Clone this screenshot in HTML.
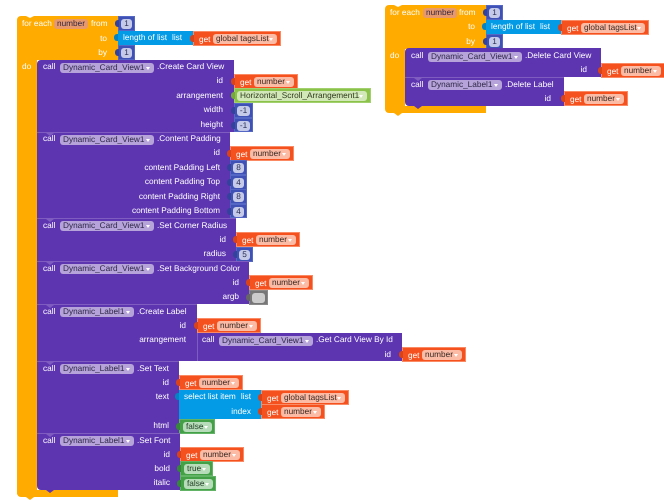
<!DOCTYPE html>
<html><head><meta charset="utf-8">
<style>
html,body{margin:0;padding:0;background:#fff}
#r{position:relative;width:664px;height:500px;overflow:hidden;background:#fff;font:8.25px/14px "Liberation Sans",sans-serif;color:#fff;text-rendering:geometricPrecision;filter:blur(.25px)}
#r div,#r span{position:absolute;box-sizing:border-box;white-space:nowrap}
.o{background:#ffab00}
.p{background:#5e35b1;border-top:1px solid #7e5cc0}
.t{line-height:14px;margin-top:1px}
.f{height:10px;line-height:10px;margin-top:.5px;border-radius:3px;background:#b5a3d9;color:#2f2748;padding-left:3px}
.f:after,.gf:after,.gn:after,.lf:after{content:"";position:absolute;right:4px;top:4px;border:2px solid transparent;border-top:3px solid #fff;border-bottom:0}
.f.x:after{display:none}
.g,.gw{position:absolute;background:#f4511e;height:15px;width:64px;border:1px solid #f98a63}
.gw{width:88px}
.g:before,.gw:before{content:"";position:absolute;left:-4px;top:3px;width:4px;height:7px;background:#d8431a;border-radius:3px 0 0 3px}
.g u,.gw u{position:absolute;left:5px;top:.5px;text-decoration:none;line-height:13px}
.gn,.gf{position:absolute;left:19px;top:1.5px;height:10px;width:40px;border-radius:3px;background:#fbbba5;color:#3a2a24;line-height:10px;padding-left:3px}
.gf{width:64px}
.n{background:#3f51b5;height:15px;width:17px;border:1px solid #5567c4}
.n:before,.lb:before,.v:before,.c:before{content:"";position:absolute;left:-4px;top:3px;width:4px;height:7px;background:#33429b;border-radius:3px 0 0 3px}
.n span{left:2px;top:1.5px;width:11px;height:10px;border-radius:3px;background:#c5cae9;color:#2a2f55;line-height:10px;text-align:center}
.lb{background:#039be5;border:0}
.lb:before{background:#0383c1}
.v{background:#43a047;border:1px solid #62b366;height:15px}
.v:before{background:#37873b}
.lf{left:3px;top:1.5px;height:10px;border-radius:3px;background:#b7dcb9;color:#24402a;line-height:10px;padding-left:3px}
.lg{background:#8bc34a;border:1px solid #a3d06f;height:15px}
.lg:before{content:"";position:absolute;left:-4px;top:3px;width:4px;height:7px;background:#76a83d;border-radius:3px 0 0 3px}
.lr{left:2px;top:1.5px;height:10px;border-radius:3px;background:#d2e8b8;color:#2e3a1d;line-height:10px;padding-left:3px}
.lr:after{content:"";position:absolute;right:4px;top:4px;border:2px solid transparent;border-top:3px solid #fff;border-bottom:0}
.c{background:#777;border:1px solid #8a8a8a;height:15px}
.c:before{background:#666}
.k{width:8px;height:3px;background:#ffab00;clip-path:polygon(0 0,100% 0,50% 100%)}
.d{width:8px;height:3px;background:#7e5cc0;clip-path:polygon(0 0,100% 0,50% 100%)}
</style></head><body>
<div id="r">

<!-- MAIN LOOP -->
<div class="o" style="left:17px;top:16px;width:101px;height:44px;border-radius:4px 0 0 0"></div>
<div class="o" style="left:17px;top:60px;width:20px;height:434px"></div>
<div class="o" style="left:17px;top:490px;width:101px;height:7px;border-radius:0 0 0 4px"></div>
<div class="k" style="left:26px;top:497px"></div>
<div style="left:26px;top:16px;width:8px;height:2px;background:#fff;clip-path:polygon(0 0,100% 0,50% 100%)"></div>
<span class="t" style="left:22px;top:16px">for each</span>
<span class="f x" style="left:54px;top:18px;width:34px;background:#e8996b;padding-left:3px">number</span>
<span class="t" style="left:91px;top:16px">from</span>
<span class="t" style="right:557px;top:31px">to</span>
<span class="t" style="right:557px;top:45px">by</span>
<span class="t" style="left:22px;top:59px">do</span>

<div class="n" style="left:118px;top:16px"><span>1</span></div>
<div class="lb" style="left:118px;top:31px;width:75px;height:14px"></div>
<span class="t" style="left:123px;top:30px">length of list</span>
<span class="t" style="left:172px;top:30px">list</span>
<div class="gw" style="left:193px;top:31px"><u>get</u><span class="gf">global tagsList</span></div>
<div class="n" style="left:118px;top:45px"><span>1</span></div>

<!-- Block 1 -->
<div class="p" style="left:37px;top:60px;width:197px;height:72px;border-top:0;border-radius:4px 0 0 0"></div>
<span class="t" style="left:43px;top:59px">call</span>
<span class="f" style="left:60px;top:62px;width:94px">Dynamic_Card_View1</span>
<span class="t" style="left:157px;top:59px">.Create Card View</span>
<span class="t" style="right:441px;top:73px">id</span>
<span class="t" style="right:441px;top:88px">arrangement</span>
<span class="t" style="right:441px;top:102px">width</span>
<span class="t" style="right:441px;top:117px">height</span>
<div class="g" style="left:234px;top:74px"><u>get</u><span class="gn">number</span></div>
<div class="lg" style="left:234px;top:88px;width:137px"><span class="lr" style="width:130px">Horizontal_Scroll_Arrangement1</span></div>
<div class="n" style="left:234px;top:103px;width:19px"><span style="width:13px">-1</span></div>
<div class="n" style="left:234px;top:118px;width:19px;height:14px"><span style="width:13px">-1</span></div>

<!-- Block 2 -->
<div class="p" style="left:37px;top:132px;width:193px;height:86px"></div>
<div class="d" style="left:46px;top:133px"></div>
<span class="t" style="left:43px;top:131px">call</span>
<span class="f" style="left:60px;top:134px;width:94px">Dynamic_Card_View1</span>
<span class="t" style="left:157px;top:131px">.Content Padding</span>
<span class="t" style="right:444px;top:145px">id</span>
<span class="t" style="right:444px;top:160px">content Padding Left</span>
<span class="t" style="right:444px;top:174px">content Padding Top</span>
<span class="t" style="right:444px;top:189px">content Padding Right</span>
<span class="t" style="right:444px;top:203px">content Padding Bottom</span>
<div class="g" style="left:230px;top:146px"><u>get</u><span class="gn">number</span></div>
<div class="n" style="left:230px;top:160px"><span>8</span></div>
<div class="n" style="left:230px;top:175px"><span>4</span></div>
<div class="n" style="left:230px;top:189px"><span>8</span></div>
<div class="n" style="left:230px;top:204px;height:14px"><span>4</span></div>

<!-- Block 3 -->
<div class="p" style="left:37px;top:218px;width:199px;height:43px"></div>
<div class="d" style="left:46px;top:219px"></div>
<span class="t" style="left:43px;top:218px">call</span>
<span class="f" style="left:60px;top:220px;width:94px">Dynamic_Card_View1</span>
<span class="t" style="left:157px;top:218px">.Set Corner Radius</span>
<span class="t" style="right:438px;top:232px">id</span>
<span class="t" style="right:438px;top:246px">radius</span>
<div class="g" style="left:236px;top:232px"><u>get</u><span class="gn">number</span></div>
<div class="n" style="left:236px;top:247px"><span>5</span></div>

<!-- Block 4 -->
<div class="p" style="left:37px;top:261px;width:212px;height:43px"></div>
<div class="d" style="left:46px;top:262px"></div>
<span class="t" style="left:43px;top:261px">call</span>
<span class="f" style="left:60px;top:263px;width:94px">Dynamic_Card_View1</span>
<span class="t" style="left:157px;top:261px">.Set Background Color</span>
<span class="t" style="right:425px;top:275px">id</span>
<span class="t" style="right:425px;top:289px">argb</span>
<div class="g" style="left:249px;top:275px"><u>get</u><span class="gn">number</span></div>
<div class="c" style="left:249px;top:290px;width:19px"><span style="left:2px;top:1.5px;width:13px;height:10px;border-radius:3px;background:#ccc"></span></div>

<!-- Block 5 -->
<div class="p" style="left:37px;top:304px;width:160px;height:57px"></div>
<div class="d" style="left:46px;top:305px"></div>
<span class="t" style="left:43px;top:304px">call</span>
<span class="f" style="left:60px;top:306px;width:74px">Dynamic_Label1</span>
<span class="t" style="left:137px;top:304px">.Create Label</span>
<span class="t" style="right:478px;top:318px">id</span>
<span class="t" style="right:478px;top:332px">arrangement</span>
<div class="g" style="left:197px;top:318px"><u>get</u><span class="gn">number</span></div>
<div class="p" style="left:197px;top:333px;width:205px;height:28px;border-top:0;border-left:1px solid #7e5cc0"></div>
<span class="t" style="left:202px;top:332px">call</span>
<span class="f" style="left:219px;top:335px;width:94px">Dynamic_Card_View1</span>
<span class="t" style="left:316px;top:332px">.Get Card View By Id</span>
<span class="t" style="right:273px;top:347px">id</span>
<div class="g" style="left:402px;top:347px"><u>get</u><span class="gn">number</span></div>

<!-- Block 6 -->
<div class="p" style="left:37px;top:361px;width:142px;height:72px"></div>
<div class="d" style="left:46px;top:362px"></div>
<span class="t" style="left:43px;top:361px">call</span>
<span class="f" style="left:60px;top:363px;width:74px">Dynamic_Label1</span>
<span class="t" style="left:137px;top:361px">.Set Text</span>
<span class="t" style="right:495px;top:375px">id</span>
<span class="t" style="right:495px;top:389px">text</span>
<span class="t" style="right:495px;top:418px">html</span>
<div class="g" style="left:179px;top:375px"><u>get</u><span class="gn">number</span></div>
<div class="lb" style="left:179px;top:390px;width:82px;height:29px"></div>
<span class="t" style="left:184px;top:389px">select list item</span>
<span class="t" style="right:413px;top:389px">list</span>
<span class="t" style="right:413px;top:404px">index</span>
<div class="gw" style="left:261px;top:390px"><u>get</u><span class="gf">global tagsList</span></div>
<div class="g" style="left:261px;top:404px"><u>get</u><span class="gn">number</span></div>
<div class="v" style="left:179px;top:419px;width:36px"><span class="lf" style="width:29px">false</span></div>

<!-- Block 7 -->
<div class="p" style="left:37px;top:433px;width:143px;height:57px;border-radius:0 0 0 4px"></div>
<div class="d" style="left:46px;top:434px"></div>
<div style="left:46px;top:490px;width:8px;height:3px;background:#5e35b1;clip-path:polygon(0 0,100% 0,50% 100%)"></div>
<span class="t" style="left:43px;top:433px">call</span>
<span class="f" style="left:60px;top:435px;width:74px">Dynamic_Label1</span>
<span class="t" style="left:137px;top:433px">.Set Font</span>
<span class="t" style="right:494px;top:447px">id</span>
<span class="t" style="right:494px;top:461px">bold</span>
<span class="t" style="right:494px;top:475px">italic</span>
<div class="g" style="left:180px;top:447px"><u>get</u><span class="gn">number</span></div>
<div class="v" style="left:180px;top:461px;width:33px"><span class="lf" style="width:26px">true</span></div>
<div class="v" style="left:180px;top:476px;width:36px"><span class="lf" style="width:29px">false</span></div>

<!-- SECOND LOOP -->
<div class="o" style="left:385px;top:5px;width:101px;height:44px;border-radius:4px 0 0 0"></div>
<div class="o" style="left:385px;top:49px;width:20px;height:60px"></div>
<div class="o" style="left:385px;top:106px;width:101px;height:7px;border-radius:0 0 0 4px"></div>
<div class="k" style="left:394px;top:113px"></div>
<div style="left:394px;top:5px;width:8px;height:2px;background:#fff;clip-path:polygon(0 0,100% 0,50% 100%)"></div>
<span class="t" style="left:390px;top:5px">for each</span>
<span class="f x" style="left:423px;top:7px;width:34px;background:#e8996b;padding-left:3px">number</span>
<span class="t" style="left:459px;top:5px">from</span>
<span class="t" style="right:189px;top:19px">to</span>
<span class="t" style="right:189px;top:34px">by</span>
<span class="t" style="left:390px;top:48px">do</span>
<div class="n" style="left:486px;top:5px"><span>1</span></div>
<div class="lb" style="left:486px;top:20px;width:75px;height:14px"></div>
<span class="t" style="left:491px;top:19px">length of list</span>
<span class="t" style="left:540px;top:19px">list</span>
<div class="gw" style="left:561px;top:20px"><u>get</u><span class="gf">global tagsList</span></div>
<div class="n" style="left:486px;top:34px"><span>1</span></div>

<div class="p" style="left:405px;top:48px;width:196px;height:29px;border-top:0;border-radius:4px 0 0 0"></div>
<span class="t" style="left:411px;top:48px">call</span>
<span class="f" style="left:428px;top:51px;width:94px">Dynamic_Card_View1</span>
<span class="t" style="left:525px;top:48px">.Delete Card View</span>
<span class="t" style="right:77px;top:62px">id</span>
<div class="g" style="left:601px;top:63px"><u>get</u><span class="gn">number</span></div>

<div class="p" style="left:405px;top:77px;width:159px;height:29px;border-radius:0 0 0 4px"></div>
<div class="d" style="left:414px;top:78px"></div>
<div style="left:414px;top:106px;width:8px;height:3px;background:#5e35b1;clip-path:polygon(0 0,100% 0,50% 100%)"></div>
<span class="t" style="left:411px;top:77px">call</span>
<span class="f" style="left:428px;top:79px;width:74px">Dynamic_Label1</span>
<span class="t" style="left:505px;top:77px">.Delete Label</span>
<span class="t" style="right:113px;top:91px">id</span>
<div class="g" style="left:564px;top:91px"><u>get</u><span class="gn">number</span></div>

</div>
</body></html>
